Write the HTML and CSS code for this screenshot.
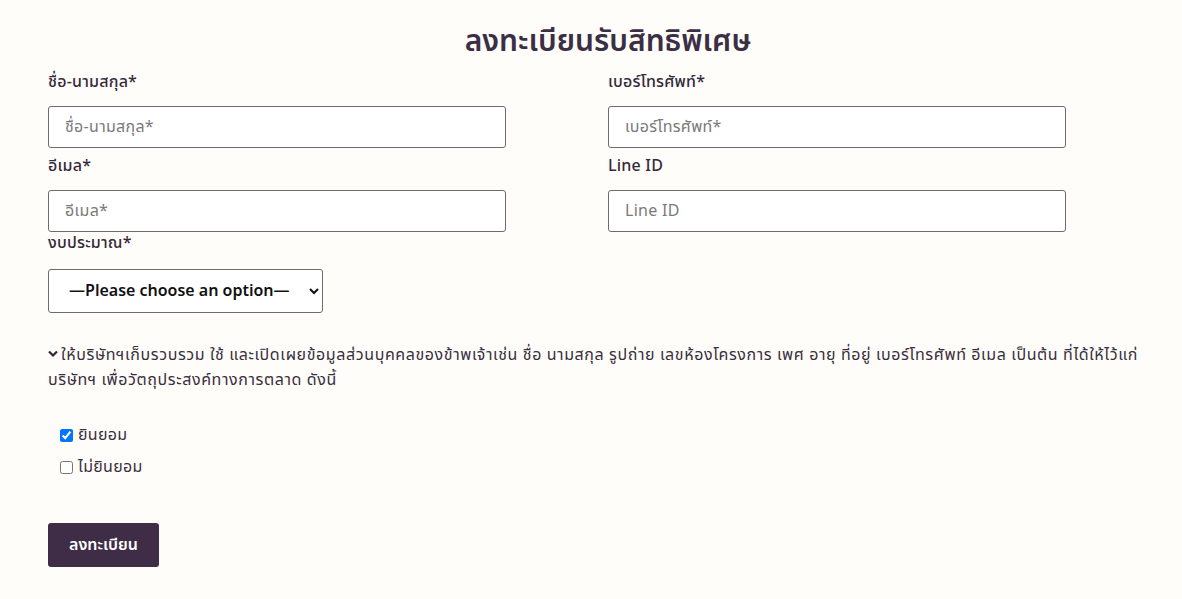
FILE: index.html
```html
<!DOCTYPE html>
<html lang="th">
<head>
<meta charset="utf-8">
<link rel="stylesheet" href="styles.css">
</head>
<body>
<div class="page">
  <h1 class="title">ลงทะเบียนรับสิทธิพิเศษ</h1>
  <form class="form">
    <div class="grid">
      <div class="field">
        <label class="label">ชื่อ-นามสกุล*</label>
        <input class="input" type="text" placeholder="ชื่อ-นามสกุล*">
      </div>
      <div class="field">
        <label class="label">เบอร์โทรศัพท์*</label>
        <input class="input" type="text" placeholder="เบอร์โทรศัพท์*">
      </div>
      <div class="field">
        <label class="label">อีเมล*</label>
        <input class="input" type="text" placeholder="อีเมล*">
      </div>
      <div class="field">
        <label class="label">Line ID</label>
        <input class="input" type="text" placeholder="Line ID">
      </div>
    </div>
    <div class="field">
      <label class="label label-budget">งบประมาณ*</label>
      <select class="select">
        <option>—Please choose an option—</option>
      </select>
    </div>
    <p class="consent"><svg class="chev" width="10" height="8" viewBox="0 0 10 8"><path d="M1 1.5 L5 5.5 L9 1.5" fill="none" stroke="#2f2436" stroke-width="2.2"/></svg>ให้บริษัทฯเก็บรวบรวม ใช้ และเปิดเผยข้อมูลส่วนบุคคลของข้าพเจ้าเช่น ชื่อ นามสกุล รูปถ่าย เลขห้องโครงการ เพศ อายุ ที่อยู่ เบอร์โทรศัพท์ อีเมล เป็นต้น ที่ได้ให้ไว้แก่ บริษัทฯ เพื่อวัตถุประสงค์ทางการตลาด ดังนี้</p>
    <div class="checks">
      <label class="check"><input type="checkbox" checked> ยินยอม</label>
      <label class="check"><input type="checkbox"> ไม่ยินยอม</label>
    </div>
    <button class="btn" type="button">ลงทะเบียน</button>
  </form>
</div>
</body>
</html>
```
FILE: styles.css
```css
* { box-sizing: border-box; }
html, body { margin: 0; padding: 0; }
body {
  background: #fffdf9;
  color: #3a2f3f;
  font-family: "Noto Sans Thai", "Noto Sans", "Open Sans", sans-serif;
  font-size: 15px;
}
.page {
  width: 1120px;
  margin-left: 48px;
  padding-top: 21px;
}
.title {
  margin: 0 0 3px;
  text-align: center;
  font-size: 30px;
  font-weight: 600;
  color: #3a2f45;
  line-height: 42px;
}
.grid {
  display: grid;
  grid-template-columns: 458px 458px;
  column-gap: 102px;
  row-gap: 2px;
}
.field {
  display: flex;
  flex-direction: column;
  align-items: flex-start;
}
.label {
  font-size: 16px;
  font-weight: 500;
  letter-spacing: 0.2px;
  line-height: 20px;
  margin: 6px 0 14px;
  color: #35293b;
}
.label-budget { margin: 1px 0 16px; }
.input {
  width: 458px;
  height: 42px;
  border: 1px solid #6e6a6e;
  border-radius: 3px;
  background: #fff;
  padding: 0 16px;
  font-family: inherit;
  font-size: 16px;
  letter-spacing: 0.3px;
  color: #333;
}
.input::placeholder { color: #7a7a7a; }
.select {
  width: 275px;
  height: 44px;
  border: 1px solid #6e6a6e;
  border-radius: 3px;
  background: #fff;
  padding: 0 12px 0 16px;
  font-family: inherit;
  font-size: 16px;
  font-weight: 600;
  color: #111;
}
.consent {
  margin: 30px 0 0;
  font-size: 16px;
  letter-spacing: 0.6px;
  line-height: 25px;
  color: #3a2f3f;
}
.chev { margin-right: 3px; vertical-align: 2px; }
.checks {
  display: flex;
  flex-direction: column;
  gap: 10px;
  margin: 31px 0 0 12px;
}
.check {
  display: flex;
  align-items: center;
  font-size: 16px;
  letter-spacing: 0.3px;
  line-height: 22px;
}
.check input { margin: 0 5px 0 0; width: 13px; height: 13px; }
.btn {
  display: block;
  margin-top: 45px;
  width: 111px;
  height: 44px;
  background: #3f2d47;
  color: #fff;
  border: none;
  border-radius: 3px;
  font-family: inherit;
  font-size: 16px;
  font-weight: 600;
}
```
